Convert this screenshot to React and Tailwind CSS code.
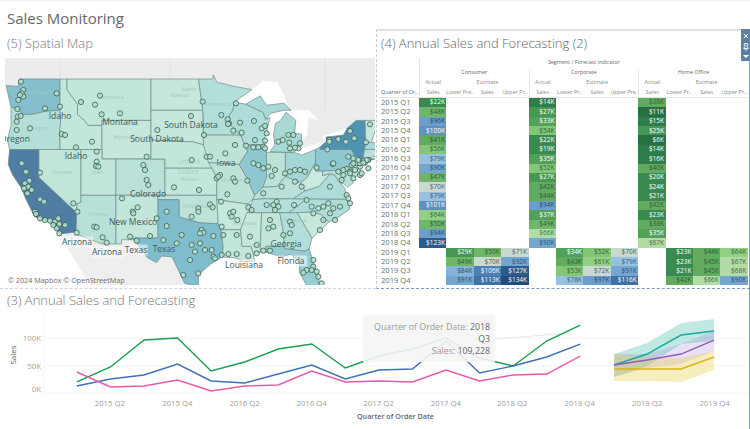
import React from "react";
import { X, Pin } from "lucide-react";

const merc = (lat) => (Math.log(Math.tan(Math.PI / 4 + (lat * Math.PI) / 360)) * 180) / Math.PI;
const px = (lon) => 60 + (lon + 117) * 7;
const py = (lat) => 79 + (merc(49) - merc(lat)) * 7.05;
const pts = (a) => {
  let s = "";
  for (let i = 0; i < a.length; i += 2) s += `${px(a[i]).toFixed(1)},${py(a[i + 1]).toFixed(1)} `;
  return s;
};

const STATES = [
  ["#84bfcb", [-124.7,48.4,-123,48.3,-122.8,49,-117,49,-117,46,-119,45.9,-121,45.6,-122.3,45.6,-123.2,46.2,-124,46.3]],
  ["#b4dfd9", [-124,46.3,-123.2,46.2,-122.3,45.6,-121,45.6,-119,45.9,-117,46,-116.9,45,-117,44.2,-117,42,-124.2,42,-124.5,43,-124,44.5]],
  ["#4f7da3", [-124.2,42,-120,42,-120,39,-114.6,35,-114.7,32.7,-117.1,32.5,-118.5,34,-120.6,34.5,-121.9,36.6,-122.5,37.8,-123.8,39.3,-124.4,40.4]],
  ["#c1e5d9", [-120,42,-114,42,-114,36.2,-114.6,36,-114.6,35,-120,39]],
  ["#c3e6da", [-117,49,-116,49,-116,48,-114.5,46.6,-114.5,45.6,-113.5,45,-113,44.5,-111,44.5,-111,42,-117,42,-117,44.2,-116.9,45,-117,46]],
  ["#c3e6da", [-116,49,-104,49,-104,45,-111,45,-111,44.5,-113,44.5,-113.5,45,-114.5,45.6,-114.5,46.6,-116,48]],
  ["#c6e7dc", [-111,45,-104,45,-104,41,-111,41]],
  ["#c1e5d9", [-114,42,-111,42,-111,41,-109,41,-109,37,-114,37]],
  ["#b7e0d8", [-114,37,-109,37,-109,31.3,-111,31.3,-114.8,32.5,-114.7,32.7,-114.6,35,-114.6,36,-114,36.2]],
  ["#b9e1d9", [-109,41,-102,41,-102,37,-109,37]],
  ["#c3e6da", [-109,37,-103,37,-103,32,-106.6,32,-106.5,31.8,-108.2,31.8,-108.2,31.3,-109,31.3]],
  ["#c6e7dc", [-104,49,-97.2,49,-96.6,46,-104,46]],
  ["#c6e7dc", [-104,46,-96.6,46,-96.5,42.5,-98,42.8,-104,43]],
  ["#c3e6da", [-104,43,-98,42.8,-96.5,42.5,-95.3,40,-102,40,-102,41,-104,41]],
  ["#c3e6da", [-102,40,-95.3,40,-94.6,39,-94.6,37,-102,37]],
  ["#bde3d9", [-103,37,-94.6,37,-94.4,33.7,-97,33.8,-100,34.5,-100,36.5,-103,36.5]],
  ["#80bdcc", [-103,36.5,-100,36.5,-100,34.5,-97,33.8,-94.4,33.7,-94,33,-93.7,31,-93.8,29.7,-95.5,28.8,-97.2,27.5,-97.2,25.9,-99.2,26.4,-101,29.7,-102.5,29.8,-103.2,29,-104.5,29.6,-106.5,31.8,-106.6,32,-103,32]],
  ["#b2dfd9", [-97.2,49,-95.2,49,-95.1,49.4,-94.6,48.7,-92,48.3,-89.6,48,-92.1,46.8,-92.3,46,-92.8,45.5,-92.8,44.7,-91.2,43.5,-96.5,43.5,-96.5,45.3,-96.6,46]],
  ["#bde3d9", [-96.5,43.5,-91.2,43.5,-90.2,41.8,-91.4,40.4,-95.8,40.6,-96.5,42.5]],
  ["#bde3d9", [-95.8,40.6,-91.4,40.4,-90.2,38.8,-89.2,37,-89.5,36.5,-90.3,36,-94.6,36.5,-94.6,39,-95.3,40]],
  ["#c6e7dc", [-94.6,36.5,-90.3,36,-89.7,36,-91.2,33,-94,33,-94.4,33.7]],
  ["#c3e6da", [-94,33,-91.2,33,-91,31,-89.7,31,-89.4,30.2,-89.2,29.2,-90.5,29.1,-92,29.6,-93.8,29.7,-93.7,31]],
  ["#aedcd8", [-92.1,46.8,-90.5,46.6,-88,45.8,-87.6,45.1,-87,45.3,-87.8,43,-87.8,42.5,-90.6,42.5,-91.2,43.5,-92.8,44.7,-92.8,45.5,-92.3,46]],
  ["#8fc8d1", [-90.6,42.5,-87.8,42.5,-87.5,41.7,-87.5,39,-88,37.9,-89.2,37,-90.2,38.8,-91.4,40.4,-90.2,41.8]],
  ["#a9d9d7", [-87,41.76,-84.8,41.7,-83.5,41.7,-82.5,43,-82.5,43.6,-83.5,43.7,-83.3,45,-84.7,45.8,-85.5,45,-86.2,44.7,-86.5,43.5,-86.3,42.5]],
  ["#a9d9d7", [-90.5,46.6,-88.4,47.4,-87.5,46.5,-85,46.7,-84,46,-85,46,-87,45.7,-87.6,45.1,-88,45.8]],
  ["#bde3d9", [-87.5,41.7,-84.8,41.7,-84.8,39.1,-86,38,-88,37.9,-87.5,39]],
  ["#a3d6d6", [-84.8,41.7,-83.5,41.7,-82.5,41.4,-80.5,42,-80.5,40.6,-81.7,39,-82.6,38.4,-84.8,39.1]],
  ["#b9e1d9", [-89.5,36.5,-88,36.6,-83.7,36.6,-82,37.5,-82.6,38.4,-84.8,39.1,-86,38,-88,37.9,-89.2,37]],
  ["#b2dfd9", [-90,35,-84.3,35,-81.7,36.6,-83.7,36.6,-88,36.6,-89.5,36.5]],
  ["#c6e7dc", [-91.2,33,-90.3,35,-88.2,35,-88.4,30.3,-89.4,30.2,-89.7,31,-91,31]],
  ["#c3e6da", [-88.2,35,-85.6,35,-85,32.3,-85,31,-87.6,31,-87.5,30.3,-88.4,30.3]],
  ["#b2dfd9", [-85.6,35,-83.1,35,-81,32,-81.4,30.7,-82,30.4,-84.9,30.7,-85,31,-85,32.3]],
  ["#95cdd2", [-87.6,31,-85,31,-84.9,30.7,-82,30.4,-81.4,30.7,-80,26.8,-80.4,25.2,-81.2,25.2,-82.8,27.8,-82.8,29,-84,30,-85.5,29.7,-87.5,30.3]],
  ["#c6e7dc", [-83.1,35,-81,35.1,-79.7,34.8,-78.6,33.9,-81,32]],
  ["#aedcd8", [-84.3,35,-83.1,35,-81,35.1,-79.7,34.8,-78.6,33.9,-77,34.6,-75.6,35.4,-76,36.55,-81.7,36.6]],
  ["#aedcd8", [-83.7,36.6,-81.7,36.6,-76,36.55,-76.3,37.8,-77,38.4,-77.8,39.3,-78.4,39.4,-80,38,-82,37.5]],
  ["#cbe9df", [-82.6,38.4,-81.7,39,-80.5,40.6,-80.5,39.7,-79.5,39.7,-79.5,39.2,-78.4,39.4,-80,38,-82,37.5]],
  ["#8fc8d1", [-80.5,42,-79.8,42.3,-79.8,42,-75.4,42,-74.8,41.3,-75.4,39.8,-80.5,39.7]],
  ["#4f93b3", [-79.8,42,-79.8,42.3,-78.9,42.9,-79,43.3,-76.5,43.5,-76,44.2,-74.7,45,-73.4,45,-73.4,44,-73.3,41.1,-72,41,-74,40.6,-74,41,-74.8,41.3,-75.4,42]],
  ["#b9e1d9", [-75.4,39.8,-74.8,41.3,-74,41,-74,40.3,-74.1,39.7,-74.9,38.9,-75.5,39.5]],
  ["#b9e1d9", [-79.5,39.7,-75.4,39.8,-75.1,38.4,-76,37.9,-76.5,38.3,-77,38.4,-77.8,39.3,-78.4,39.4,-79.5,39.2]],
  ["#b9e1d9", [-73.7,41,-73.5,42,-71.8,42,-71.8,41.3]],
  ["#a9d9d7", [-73.5,42,-73.3,42.75,-71,42.7,-70,41.7,-71.8,42]],
  ["#c6e7dc", [-73.4,45,-71.5,45,-72.5,42.75,-73.3,42.75]],
];

const CANADA = [-130,60,-60,60,-60,45,-72,45,-74.7,45,-76,44.2,-77,44,-79.7,43.3,-79,42.9,-80,42.7,-82.5,42.1,-82.5,43,-81.7,43.5,-81.5,45.3,-80,45,-81.5,46,-84,46,-84.5,46.5,-85,47.5,-86,48.7,-88,48.8,-89.6,48,-92,48.3,-94.6,48.7,-95.1,49.4,-95.2,49,-122.8,49,-123,48.3,-124.7,48.4,-126,49.5,-128,51];
const MEXICO = [-117.1,32.5,-114.8,32.5,-111,31.3,-108.2,31.3,-108.2,31.8,-106.5,31.8,-104.5,29.6,-103.2,29,-102.5,29.8,-101,29.7,-99.2,26.4,-97.2,25.9,-97.7,22,-110,22,-114,28];

const Z3 = [63,245,70,270,65,280,70,290,60,285,55,300,170,280,135,325,180,320,52,327,53,350,62,348,50,365,50,390,90,385,185,402,195,405,243,306,300,287,285,314,305,343,360,340,472,390,573,348,608,305,612,405,228,442,276,425,708,310,664,345,683,358,687,370,684,372,720,368,762,363,700,392,725,398,785,385,795,378,800,400,765,420,705,435,738,437,760,442,775,442,790,440,795,422,795,445,835,425,865,405,880,405,848,420,868,428,900,430,870,445,895,445,885,443];
const Z7 = [268,150,268,155,295,147,318,155,330,123,343,145,378,157,390,103,262,178,278,222,230,233,350,220,370,212,375,218,385,210,360,230,335,225,320,237,295,245,310,255,330,245,345,240,360,255,340,265,305,270];
const Z4 = [65,40,78,65,120,68,290,5,290,35,288,48,295,50,75,100,88,92,85,110,72,115,95,120,82,130,120,148,132,155,105,185,108,192,120,205,135,210,150,212,165,215,175,205,178,222,195,225,170,235,178,250,160,225,230,248,220,160,232,185,283,230,290,232,308,262,320,278,366,145,398,185,413,172,400,190,470,205,440,20,430,45,435,60,440,90,445,105,575,30,620,20,630,20,676,10,522,112,597,120,650,85,660,75,655,80,682,133,663,155,630,163,638,172,595,175,595,185,575,200,690,190,700,185,695,200,712,210,745,172,755,180,800,165,760,40,775,45,790,55,805,50,815,78,700,85,705,95,742,92,790,130,830,155,820,165,835,170,810,210,825,180,882,165,920,150,845,110,855,70,870,65,885,60,900,60,915,65,825,60,885,95,905,110,990,110,1000,40,1045,20,1060,40,1080,40,1100,30,1030,60,1050,70,1085,70,1105,55,1040,135,1045,145,1050,160,985,160,970,170,935,170,955,175,1000,175,1020,170,990,190,1005,210,970,210,940,190,500,185,500,228,545,255,490,270,530,280,575,285,605,240,610,248,600,250,640,258,665,230,600,280,585,305,570,330,615,300,635,300,640,320,645,325,665,315,685,312,710,312,745,318,770,310,790,302,810,302,670,255,710,255,750,260,805,235,820,230,850,255,870,215,875,225,870,250,960,240,770,285,550,375,595,370,940,330,940,350,935,360,920,360,910,368,950,365,955,380,965,400,450,258,410,272,390,260,1075,30,1090,38,1060,25];

const DOTS = [];
for (let i = 0; i < Z3.length; i += 2) DOTS.push([Z3[i] / 3, Z3[i + 1] / 3]);
for (let i = 0; i < Z7.length; i += 2) DOTS.push([240 + Z7[i] / 3, 90 + Z7[i + 1] / 3]);
for (let i = 0; i < Z4.length; i += 2) DOTS.push([Z4[i] / 3, 150 + Z4[i + 1] / 3]);

const LABELS = [
  ["Idaho", 60, 116], ["Montana", 120, 122], ["South Dakota", 191, 125], ["South Dakota", 157, 139],
  ["Oregon", 15, 139], ["Idaho", 76, 156], ["Iowa", 226, 163], ["Colorado", 148, 194], ["New Mexico", 133, 222],
  ["Arizona", 77, 242], ["Arizona", 107, 252], ["Texas", 136, 250], ["Texas", 164, 249], ["Georgia", 286, 244],
  ["Louisiana", 244, 265], ["Florida", 291, 261],
];
const FAINT = [
  ["Washington", 38, 94], ["Oregon", 38, 130], ["Nevada", 62, 174], ["Utah", 97, 174], ["Wyoming", 125, 139],
  ["Montana", 112, 99], ["North", 189, 91], ["Dakota", 180, 97], ["Minnesota", 218, 106], ["Arizona", 98, 216],
  ["Kansas", 190, 181], ["Oklahoma", 195, 208], ["Missouri", 232, 182], ["Arkansas", 245, 225], ["Alabama", 295, 222],
];
const STRONG_BG = new Set(["Texas136", "Louisiana244", "Florida291", "Arizona77", "Arizona107"]);

const MapChart = () => (
  <svg viewBox="5 58 370 227" className="block w-[370px] h-[227px]">
    <rect x="5" y="58" width="370" height="227" fill="#ffffff" />
    <polygon points={pts(CANADA)} fill="#ececec" />
    <polygon points={pts(MEXICO)} fill="#eeeeee" />
    <g stroke="#e0e0e0" strokeWidth="0.7">
      <line x1="60" y1="58" x2="60" y2="79" />
      <line x1="170" y1="58" x2="170" y2="79" />
      <line x1="325" y1="58" x2="325" y2="110" />
    </g>
    {STATES.map(([c, p], i) => (
      <polygon key={i} points={pts(p)} fill={c} stroke="#6f8c8a" strokeWidth="0.7" />
    ))}
    {FAINT.map(([t, x, y], i) => (
      <text key={i} x={x} y={y} fontSize="5.5" fill="#9fcbc3" textAnchor="middle" fontFamily="Open Sans, sans-serif">{t}</text>
    ))}
    <text x="188" y="164" fontSize="7.5" fill="#a6d2c9" textAnchor="middle" fontFamily="Open Sans, sans-serif">United</text>
    <text x="188" y="174" fontSize="7.5" fill="#a6d2c9" textAnchor="middle" fontFamily="Open Sans, sans-serif">States</text>
    {DOTS.map(([x, y], i) => (
      <circle key={i} cx={x} cy={y} r="2.6" fill="#aee0ca" stroke="#3f5a56" strokeWidth="0.8" fillOpacity="0.9" />
    ))}
    {LABELS.map(([t, x, y], i) => (
      <g key={i}>
        {STRONG_BG.has(t + x) && (
          <rect x={x - t.length * 2.3} y={y - 5.5} width={t.length * 4.6} height="11" fill="#ffffff" fillOpacity="0.55" />
        )}
        <text x={x} y={y + 3} fontSize="8.5" fill="#3f5855" textAnchor="middle" fontFamily="Open Sans, sans-serif">{t}</text>
      </g>
    ))}
    <text x="8" y="283" fontSize="7.2" fill="#6d6d6d" fontFamily="Open Sans, sans-serif">© 2024 Mapbox © OpenStreetMap</text>
  </svg>
);

const QUARTERS = ["2015 Q1","2015 Q2","2015 Q3","2015 Q4","2016 Q1","2016 Q2","2016 Q3","2016 Q4","2017 Q1","2017 Q2","2017 Q3","2017 Q4","2018 Q1","2018 Q2","2018 Q3","2018 Q4","2019 Q1","2019 Q2","2019 Q3","2019 Q4"];
const ACTUAL = [
  [22,48,96,100,41,56,79,90,47,70,79,101,64,50,94,123],
  [14,27,33,54,22,19,35,52,27,42,44,94,37,49,66,90],
  [38,11,15,25,6,14,16,40,20,24,21,42,23,38,35,67],
];
const FORE = [
  [[29,49,84,91],[50,70,106,113],[71,92,127,134]],
  [[34,43,53,78],[52,61,72,97],[70,79,91,116]],
  [[23,23,21,42],[44,45,45,66],[64,67,68,90]],
];

const cellClass = (v) => {
  if (v <= 11) return "bg-[#28703f] text-white";
  if (v <= 16) return "bg-[#2f7d49] text-white";
  if (v <= 24) return "bg-[#3a8a4f] text-white";
  if (v <= 29) return "bg-[#479654] text-white";
  if (v <= 37) return "bg-[#53a05a] text-white";
  if (v <= 45) return "bg-[#62aa5f] text-[#2f5a3a]";
  if (v <= 50) return "bg-[#6fb768] text-[#2f5a3a]";
  if (v <= 56) return "bg-[#83c675] text-[#35603f]";
  if (v <= 64) return "bg-[#93d182] text-[#35603f]";
  if (v <= 68) return "bg-[#b3dba6] text-[#3f6a4a]";
  if (v <= 72) return "bg-[#c9d9d2] text-[#4d5f5f]";
  if (v <= 79) return "bg-[#97c1e0] text-[#3d5a70]";
  if (v <= 84) return "bg-[#85b3da] text-[#2f4f68]";
  if (v <= 92) return "bg-[#74a6d2] text-[#2f4f68]";
  if (v <= 97) return "bg-[#6b9ecb] text-[#2a4a64]";
  if (v <= 101) return "bg-[#5f92c2] text-white";
  if (v <= 106) return "bg-[#4d80b3] text-white";
  if (v <= 116) return "bg-[#3f71a5] text-white";
  if (v <= 127) return "bg-[#2c5c8e] text-white";
  return "bg-[#1f4d7e] text-white";
};

const Cell = ({ v }) =>
  v == null ? (
    <div className="h-full" />
  ) : (
    <div className={`h-full flex items-center justify-end pr-[1.5px] text-[6.5px] leading-none overflow-hidden ${cellClass(v)}`}>${v}K</div>
  );

const HeadCell = ({ span, children, dark }) => (
  <div className={`flex items-center justify-center text-[5.4px] leading-none whitespace-nowrap overflow-hidden ${span} ${dark ? "text-[#666]" : "text-[#8a8a8a]"}`}>{children}</div>
);

const Heatmap = () => (
  <div className="w-[368px] ml-[3px] shrink-0">
    <div className="grid grid-cols-[39px_repeat(12,27.4px)] grid-rows-[10px_10px_10px_10px] h-[40px] border-b border-[#e6e6e6]">
      <div className="row-span-3" />
      <HeadCell span="col-span-12 border-l border-[#e6e6e6]" dark>Segment / Forecast indicator</HeadCell>
      <HeadCell span="col-span-4 border-l border-[#e6e6e6]" dark>Consumer</HeadCell>
      <HeadCell span="col-span-4 border-l border-[#e6e6e6]" dark>Corporate</HeadCell>
      <HeadCell span="col-span-4 border-l border-[#e6e6e6]" dark>Home Office</HeadCell>
      {[0, 1, 2].map((g) => (
        <React.Fragment key={g}>
          <HeadCell span="border-l border-[#e6e6e6]">Actual</HeadCell>
          <HeadCell span="col-span-3">Estimate</HeadCell>
        </React.Fragment>
      ))}
      <HeadCell dark span="justify-start pl-[1px]">Quarter of Or..</HeadCell>
      {["Lower Pre..", "Lower Pr..", "Lower Pr.."].map((l, g) => (
        <React.Fragment key={g}>
          <HeadCell span="border-l border-[#e6e6e6]">Sales</HeadCell>
          <HeadCell span="">{l}</HeadCell>
          <HeadCell span="">Sales</HeadCell>
          <HeadCell span="">{g === 1 ? "Upper Pre.." : "Upper Pr.."}</HeadCell>
        </React.Fragment>
      ))}
    </div>
    <div className="grid grid-cols-[39px_repeat(12,27.4px)] auto-rows-[9.37px]">
      {QUARTERS.map((q, r) => (
        <React.Fragment key={q}>
          <div className="flex items-center text-[7.6px] leading-none text-[#6f6f6f] whitespace-nowrap pl-[1px]">{q}</div>
          {[0, 1, 2].map((g) => (
            <React.Fragment key={g}>
              <Cell v={r < 16 ? ACTUAL[g][r] : null} />
              {[0, 1, 2].map((k) => (
                <Cell key={k} v={r >= 16 ? FORE[g][k][r - 16] : null} />
              ))}
            </React.Fragment>
          ))}
        </React.Fragment>
      ))}
    </div>
  </div>
);

const qx = (i) => 77 + i * 33.6;
const line = (a) => a.map((y, i) => `${qx(i).toFixed(1)},${y}`).join(" ");
const GREEN = [381,366,339,337,370,361,348,343,367,355,348,337,357,365,340,324];
const BLUE = [385,378,374,363,380,382,373,364,378,369,368,340,372,365,356,343];
const PINK = [371,386,385,379,390,385,384,370,381,380,381,369,380,374,373,355];
const FX = [615, 648, 682, 715];
const fline = (a) => a.map((y, i) => `${FX[i]},${y}`).join(" ");
const band = (t, b) => fline(t) + " " + [...b].reverse().map((y, i) => `${FX[3 - i]},${y}`).join(" ");
const TICKS = [["2015 Q2",110],["2015 Q4",177.5],["2016 Q2",245],["2016 Q4",312],["2017 Q2",379],["2017 Q4",446.5],["2018 Q2",513],["2018 Q4",580.5],["2019 Q2",648],["2019 Q4",715.5]];

const LineChart = () => (
  <svg viewBox="0 310 750 119" className="block w-[749px] h-[119px]" fontFamily="Open Sans, sans-serif">
    <g stroke="#f1f1f1" strokeWidth="0.8">
      <line x1="44" y1="337" x2="749" y2="337" />
      <line x1="44" y1="365" x2="749" y2="365" />
      <line x1="44" y1="392" x2="749" y2="392" />
      <line x1="44" y1="315" x2="44" y2="392" />
    </g>
    <line x1="495" y1="338" x2="570" y2="332" stroke="#e6e6e6" strokeWidth="1" />
    <polyline points={line(GREEN)} fill="none" stroke="#16a04f" strokeWidth="1.4" />
    <polyline points={line(BLUE)} fill="none" stroke="#3f6fb5" strokeWidth="1.4" />
    <polyline points={line(PINK)} fill="none" stroke="#e85aa8" strokeWidth="1.4" />
    <polygon points={band([353,342,322,318],[376,365,343,340])} fill="#3dbcaa" fillOpacity="0.32" />
    <polygon points={band([353,353,343,330],[376,367,363,350])} fill="#9670c8" fillOpacity="0.22" />
    <polygon points={band([353,357,357,350],[380,380,381,369])} fill="#ead050" fillOpacity="0.36" />
    <polyline points={fline([364,353,334,330])} fill="none" stroke="#14ab9a" strokeWidth="1.4" />
    <polyline points={fline([364,359,353,339])} fill="none" stroke="#9558c4" strokeWidth="1.4" />
    <polyline points={fline([368,368,368,356])} fill="none" stroke="#dcb414" strokeWidth="1.4" />
    {[["100K",337],["50K",365],["0K",388]].map(([t, y]) => (
      <text key={t} x="41" y={y + 3} textAnchor="end" fontSize="7.8" fill="#a0a0a0">{t}</text>
    ))}
    <text x="0" y="0" transform="translate(16.5,354) rotate(-90)" textAnchor="middle" fontSize="8" fill="#666">Sales</text>
    {TICKS.map(([t, x]) => (
      <text key={t} x={x} y="405" textAnchor="middle" fontSize="7.8" fill="#a0a0a0">{t}</text>
    ))}
    <text x="396" y="418.5" textAnchor="middle" fontSize="7.2" fontWeight="600" fill="#666">Quarter of Order Date</text>
  </svg>
);

export default function App() {
  return (
    <div className="relative w-[750px] h-[429px] overflow-hidden bg-white font-['Open_Sans',sans-serif] border-t border-[#f2f2f2]">
      <div className="h-[28px] flex items-end pl-[7px] text-[15px] leading-[22px] text-[#666]">Sales Monitoring</div>
      <div className="flex h-[260px]">
        <div className="w-[376px] shrink-0 border-b border-dashed border-[#c9d6ea]">
          <div className="h-[29px] pl-[7px] flex items-center text-[13px] leading-none font-light text-[#777]">(5) Spatial Map</div>
          <div className="pl-[5px] pr-[1px]"><MapChart /></div>
        </div>
        <div className="relative flex-1 border-t-2 border-t-[#e2e2e2] border-l border-l-[#c9c9c9] border-dashed border-b border-b-[#7f97bb] border-r border-r-[#7f97bb] [border-top-style:solid] [border-right-style:solid]">
          <div className="h-[27px] pl-[4px] pb-[2px] flex items-center text-[13px] leading-none font-light text-[#666]">(4) Annual Sales and Forecasting (2)</div>
          <Heatmap />
          <div className="absolute right-[-2px] top-[-2px] w-[10px] h-[32px] bg-[#5d7fa3] flex flex-col items-center justify-around py-[1px] text-white">
            <X size={8} strokeWidth={3} />
            <Pin size={8} strokeWidth={3} />
            <div className="w-0 h-0 border-l-[3px] border-r-[3px] border-t-[3px] border-l-transparent border-r-transparent border-t-white" />
          </div>
        </div>
      </div>
      <div className="border-r border-[#7f97bb] h-[141px]">
        <div className="h-[22px] pl-[7px] flex items-center text-[13px] leading-none font-light text-[#777]">(3) Annual Sales and Forecasting</div>
        <LineChart />
      </div>
      <div className="absolute left-[363px] top-[314px] w-[132px] h-[47px] bg-[#f5f5f5]/90 flex flex-col items-end justify-center pr-[5px] text-[8.8px] leading-[12px] text-[#9a9a9a]">
        <div>Quarter of Order Date: <span className="text-[#666]">2018</span></div>
        <div className="text-[#666]">Q3</div>
        <div>Sales: <span className="text-[#666]">109,228</span></div>
      </div>
    </div>
  );
}
